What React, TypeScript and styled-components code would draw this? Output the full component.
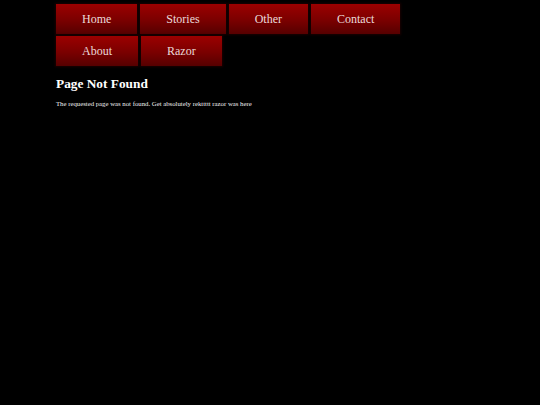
import { createGlobalStyle, styled } from "styled-components";

const GlobalStyle = createGlobalStyle`
  html, body {
    margin: 0;
    padding: 0;
    background: #000;
  }
  body {
    font-family: "Liberation Serif", "Times New Roman", serif;
    color: #fff;
  }
`;

const Page = styled.div`
  width: 540px;
  height: 405px;
  padding: 4px 0 0 56px;
  box-sizing: border-box;
  background: #000;
`;

const Nav = styled.nav`
  display: flex;
  flex-wrap: wrap;
  gap: 2px 3px;
  width: 410px;
`;

const NavItem = styled.a`
  display: block;
  height: 30px;
  line-height: 30px;
  padding: 0 26px;
  font-size: 12px;
  color: #eadada;
  text-decoration: none;
  background: linear-gradient(to bottom, #9c0000 0%, #7a0000 55%, #560000 100%);
  box-shadow: 0 0 2px 1px rgba(30, 0, 0, 0.9);
`;

const Title = styled.h1`
  margin: 10px 0 0;
  font-size: 13.33px;
  line-height: 16px;
  font-weight: bold;
`;

const Message = styled.p`
  margin: 8px 0 0;
  font-size: 6.75px;
  line-height: 8px;
  color: #f0f0f0;
`;

const links = ["Home", "Stories", "Other", "Contact", "About", "Razor"];

export default function App() {
  return (
    <>
      <GlobalStyle />
      <Page>
        <Nav>
          {links.map((label) => (
            <NavItem key={label} href="#">
              {label}
            </NavItem>
          ))}
        </Nav>
        <Title>Page Not Found</Title>
        <Message>
          The requested page was not found. Get absolutely rekttttt razor was here
        </Message>
      </Page>
    </>
  );
}
